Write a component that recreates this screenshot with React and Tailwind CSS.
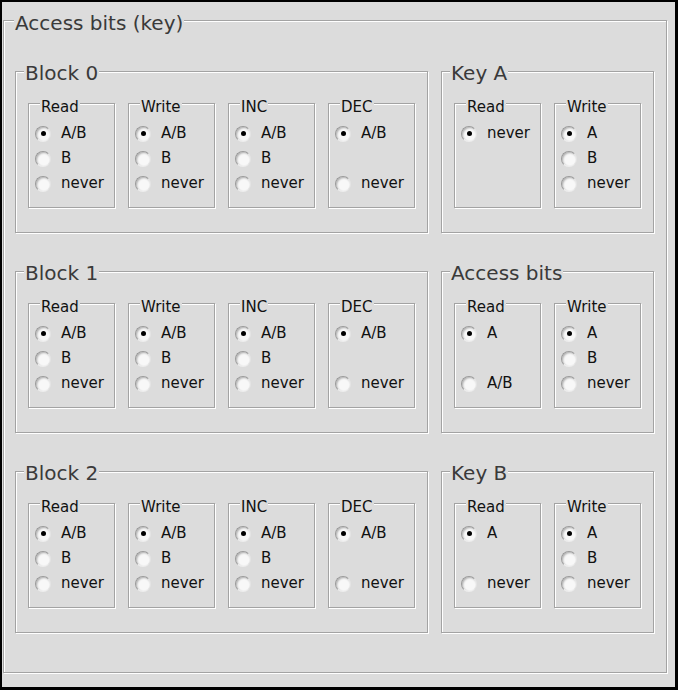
import React from "react";

const blocks = ["Block 0", "Block 1", "Block 2"];

const blockGroups = [
    { title: "Read", items: ["A/B", "B", "never"] },
    { title: "Write", items: ["A/B", "B", "never"] },
    { title: "INC", items: ["A/B", "B", "never"] },
    { title: "DEC", items: ["A/B", null, "never"] },
];

const sideGroups = [
    {
        title: "Key A",
        groups: [
            { title: "Read", items: ["never", null, null] },
            { title: "Write", items: ["A", "B", "never"] },
        ],
    },
    {
        title: "Access bits",
        groups: [
            { title: "Read", items: ["A", null, "A/B"] },
            { title: "Write", items: ["A", "B", "never"] },
        ],
    },
    {
        title: "Key B",
        groups: [
            { title: "Read", items: ["A", null, "never"] },
            { title: "Write", items: ["A", "B", "never"] },
        ],
    },
];

const etched = "border border-[#a3a3a3] shadow-[1px_1px_0_#ffffff,inset_1px_1px_0_#ffffff]";

const Radio = ({ label, checked }) => (
    <div className="flex h-[25px] items-center">
        {label && (
            <>
                <span className="flex h-[16px] w-[16px] items-center justify-center rounded-full border border-t-[#9a9a9a] border-l-[#9a9a9a] border-r-[#e4e4e4] border-b-[#ececec] bg-[#f8f8f8] shadow-[inset_1px_1px_2px_#b0b0b0]">
                    {checked && <span className="h-[5px] w-[5px] rounded-full bg-black" />}
                </span>
                <span className="ml-[10px] text-[15px] leading-none text-[#111111]">{label}</span>
            </>
        )}
    </div>
);

// small "Read / Write / INC / DEC" box
const SmallGroup = ({ title, items }) => (
    <fieldset className={`w-[87px] px-[6px] pt-[6px] pb-[11px] ${etched}`}>
        <legend className="ml-[5px] bg-[#dcdcdc] px-[1px] pt-[8px] text-[15px] leading-[15px] text-[#111111]">
            {title}
        </legend>
        {items.map((item, i) => (
            <Radio key={i} label={item} checked={i === 0} />
        ))}
    </fieldset>
);

const BigGroup = ({ title, children }) => (
    <fieldset className={`px-[12px] pt-[9px] pb-[24px] ${etched}`}>
        <legend className="-ml-[4px] bg-[#dcdcdc] px-[1px] pt-[3px] text-[20px] leading-[20px] text-[#3a3a3a]">
            {title}
        </legend>
        <div className="flex gap-[13px]">{children}</div>
    </fieldset>
);

export default function App() {
    return (
        <div
            className="h-[690px] w-[678px] bg-black pt-[2px] pr-[3px] pb-[3px] pl-[2px]"
            style={{ fontFamily: "'DejaVu Sans', Verdana, sans-serif" }}
        >
            <div className="h-full w-full bg-[#dcdcdc] pt-[5px] pl-[1px]">
                <fieldset className={`w-[664px] px-[11px] pt-[27px] pb-[39px] ${etched}`}>
                    <legend className="ml-[-1px] bg-[#dcdcdc] px-[1px] pt-[6px] text-[20px] leading-[20px] text-[#3a3a3a]">
                        Access bits (key)
                    </legend>
                    <div className="flex flex-col gap-[27px]">
                        {blocks.map((name, b) => (
                            <div key={name} className="flex gap-[13px]">
                                <BigGroup title={name}>
                                    {blockGroups.map((g) => (
                                        <SmallGroup key={g.title} title={g.title} items={g.items} />
                                    ))}
                                </BigGroup>
                                <BigGroup title={sideGroups[b].title}>
                                    {sideGroups[b].groups.map((g) => (
                                        <SmallGroup key={g.title} title={g.title} items={g.items} />
                                    ))}
                                </BigGroup>
                            </div>
                        ))}
                    </div>
                </fieldset>
            </div>
        </div>
    );
}
